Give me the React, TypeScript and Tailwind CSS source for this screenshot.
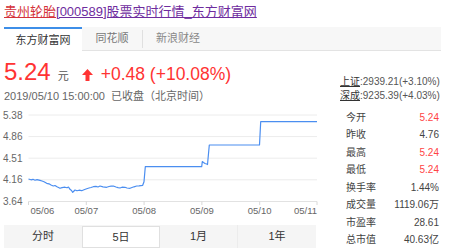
import React from 'react';

const linePoints: [number, number][] = [
  [28.5, 179], [31, 179.8], [33, 179.3], [35, 180.2], [37, 179.6], [40, 180.4], [42, 181], [44, 181.8],
  [46.7, 183.3], [49, 183.8], [51, 185], [53.3, 186], [55, 185.5], [57, 186.8], [60, 188.3], [62, 187.6],
  [65, 187.2], [67, 187.8], [68.5, 187], [70, 189.3], [71.5, 190.5], [72.7, 192.3], [74, 191], [75, 190],
  [77, 190.8], [79, 190.2], [81.7, 190.7], [84, 189.8], [86.7, 188.7], [89, 188], [91, 187.5], [93.3, 186.7],
  [96, 186.4], [98, 187], [100, 186], [103, 186.8], [106.7, 187.3], [109, 186.5], [111, 186.2], [113.3, 186],
  [116, 187], [118, 187.6], [120, 188], [122, 187.2], [125, 187.3], [127, 188], [130, 188.3], [132, 187.5],
  [134, 186.8], [136.7, 186], [139, 185.8], [142.7, 185.3], [144, 181.7], [145.3, 166.7], [201.7, 166.7],
  [202.3, 161.5], [203.5, 162.5], [205, 163.5], [206.7, 164], [207.5, 164.5], [209.3, 145], [259.5, 145],
  [260.7, 121.7], [317, 121.7],
];

const yTicks = [
  { label: '5.38', y: 115 },
  { label: '4.86', y: 136.6 },
  { label: '4.51', y: 158.2 },
  { label: '4.16', y: 179.8 },
];

const xTicks = [
  { label: '05/06', x: 28.5 },
  { label: '05/07', x: 86.3 },
  { label: '05/08', x: 144.1 },
  { label: '05/09', x: 201.9 },
  { label: '05/10', x: 259.7 },
  { label: '05/11', x: 317 },
];

const stats = [
  { label: '今开', value: '5.24', up: true },
  { label: '昨收', value: '4.76' },
  { label: '最高', value: '5.24', up: true },
  { label: '最低', value: '5.24', up: true },
  { label: '换手率', value: '1.44%' },
  { label: '成交量', value: '1119.06万' },
  { label: '市盈率', value: '28.61' },
  { label: '总市值', value: '40.63亿' },
];

const PriceChart: React.FC = () => (
  <svg width={320} height={121} viewBox="0 104 320 121" className="mt-[1px] block">
    {yTicks.map(t => (
      <g key={t.label}>
        <line x1={28.5} x2={317} y1={t.y} y2={t.y} stroke="#ececec" strokeWidth={1} />
        <text x={3} y={t.y + 3.5} fontSize={10} fill="#666">{t.label}</text>
      </g>
    ))}
    <line x1={28.5} x2={317} y1={201.5} y2={201.5} stroke="#e2e2e2" strokeWidth={1} />
    <text x={3} y={205} fontSize={10} fill="#666">3.64</text>
    {xTicks.map((t, i) => (
      <g key={t.label}>
        <line x1={t.x} x2={t.x} y1={201.5} y2={205} stroke="#d8d8d8" strokeWidth={1} />
        <text
          x={i === xTicks.length - 1 ? t.x : i === 0 ? t.x + 2 : t.x}
          y={214}
          fontSize={9.5}
          fill="#666"
          textAnchor={i === xTicks.length - 1 ? 'end' : i === 0 ? 'start' : 'middle'}
        >
          {t.label}
        </text>
      </g>
    ))}
    <polyline
      points={linePoints.map(p => p.join(',')).join(' ')}
      fill="none"
      stroke="#4b8ef0"
      strokeWidth={1.2}
      strokeLinejoin="round"
    />
  </svg>
);

const App: React.FC = () => {
  return (
    <div className="w-[451px] h-[251px] bg-white overflow-hidden font-['Liberation_Sans','Noto_Sans_CJK_SC',sans-serif]">
      {/* Title */}
      <div className="h-[27px] pl-[4px] pt-[2px] text-[13px] leading-[20px]">
        <span className="text-[#d4323a] underline">贵州轮胎</span>
        <span className="text-[#6e2c9e] underline">[000589]股票实时行情_东方财富网</span>
      </div>

      {/* Source tabs */}
      <div className="ml-[4px] w-[437px] h-[24px] bg-[#f7f7f7] border-b border-[#e3e3e3] flex text-[11px]">
        <div className="w-[78px] h-[24px] -mb-px bg-white border-t-2 border-[#3d8ee8] flex items-center justify-center text-[#333]">
          东方财富网
        </div>
        <div className="w-[60px] flex items-center justify-center text-[#777]">同花顺</div>
        <div className="w-px h-[18px] mt-[3px] bg-[#e0e0e0]" />
        <div className="pl-[13px] flex items-center text-[#888]">新浪财经</div>
      </div>

      <div className="flex">
        {/* Left: price and chart */}
        <div className="w-[320px]">
          <div className="mt-[7px] h-[28px] pl-[4px] flex items-baseline">
            <span className="text-[24px] leading-[28px] text-[#f33]">5.24</span>
            <span className="ml-[7px] text-[11px] text-[#555]">元</span>
            <svg width={11} height={12} viewBox="0 0 11 12" className="ml-[13px] self-end mb-[5px]">
              <path d="M5.5 0 L11 6 L7.5 6 L7.5 12 L3.5 12 L3.5 6 L0 6 Z" fill="#f33" />
            </svg>
            <span className="ml-[8px] text-[17.5px] text-[#f33]">+0.48 (+10.08%)</span>
          </div>
          <div className="mt-[3px] h-[14px] pl-[4px] text-[11px] leading-[14px] text-[#666] whitespace-nowrap">
            2019/05/10 15:00:00&nbsp;&nbsp;已收盘（北京时间）
          </div>
          <PriceChart />
          <div className="ml-[4px] w-[312px] h-[23px] bg-[#f5f5f5] flex text-[11px] text-[#333]">
            <div className="w-[78px] flex items-center justify-center">分时</div>
            <div className="w-[78px] h-[22px] mt-px bg-white border border-[#e0e0e0] flex items-center justify-center">5日</div>
            <div className="w-[78px] flex items-center justify-center border-r border-[#ececec]">1月</div>
            <div className="w-[78px] flex items-center justify-center">1年</div>
          </div>
        </div>

        {/* Right: indices and stats */}
        <div className="ml-[20px] w-[100px] pt-[24px] text-[10px]">
          <div className="h-[14px] leading-[14px] text-right pr-[2px] text-[#555] whitespace-nowrap">
            <span className="underline text-[#333]">上证</span>:2939.21(+3.10%)
          </div>
          <div className="h-[14px] leading-[14px] text-right pr-[2px] text-[#555] whitespace-nowrap">
            <span className="underline text-[#333]">深成</span>:9235.39(+4.03%)
          </div>
          <div className="mt-[5.5px]">
            {stats.map(s => (
              <div key={s.label} className="h-[17.5px] leading-[17.5px] flex justify-between pl-[6px] pr-[1px]">
                <span className="text-[#444]">{s.label}</span>
                <span className={s.up ? 'text-[#f44]' : 'text-[#444]'}>{s.value}</span>
              </div>
            ))}
          </div>
        </div>
      </div>
    </div>
  );
};

export default App;
